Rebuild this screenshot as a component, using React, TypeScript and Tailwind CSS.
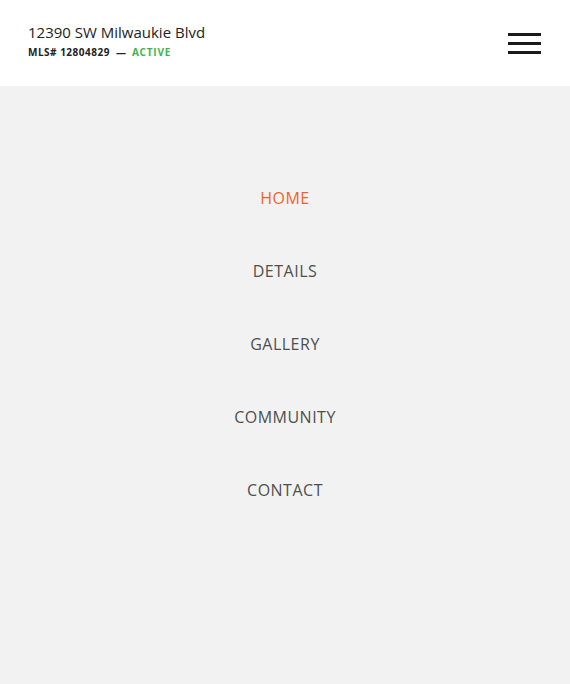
import React from "react";

const items = ["HOME", "DETAILS", "GALLERY", "COMMUNITY", "CONTACT"];

export default function App() {
  return (
    <div className="w-[570px] h-[684px] flex flex-col bg-[#f2f2f2]" style={{ fontFamily: '"Open Sans", "Liberation Sans", sans-serif' }}>
      <header className="h-[86px] bg-white flex items-center justify-between pl-[28px] pr-[29px]">
        <div className="flex flex-col pb-[6px]">
          <div className="text-[15px] leading-[18px] text-[#222]">12390 SW Milwaukie Blvd</div>
          <div className="mt-[5px] flex items-center text-[10px] leading-[12px] font-bold text-[#222]">
            <span className="tracking-[0.5px]">MLS# 12804829</span>
            <span className="mx-[6px]">—</span>
            <span className="text-[#3cb54a] tracking-[0.8px]">ACTIVE</span>
          </div>
        </div>
        <button className="flex flex-col gap-[6px] w-[33px]" aria-label="menu">
          <span className="block h-[3px] bg-[#1a1a1a]" />
          <span className="block h-[3px] bg-[#1a1a1a]" />
          <span className="block h-[3px] bg-[#1a1a1a]" />
        </button>
      </header>
      <nav className="flex flex-col items-center pt-[100px]">
        {items.map((it, i) => (
          <a key={it} className={`h-[73px] text-[16px] leading-[24px] tracking-[0.5px] font-medium ${i === 0 ? "text-[#f26227]" : "text-[#4f4f4f]"}`}>
            {it}
          </a>
        ))}
      </nav>
    </div>
  );
}
